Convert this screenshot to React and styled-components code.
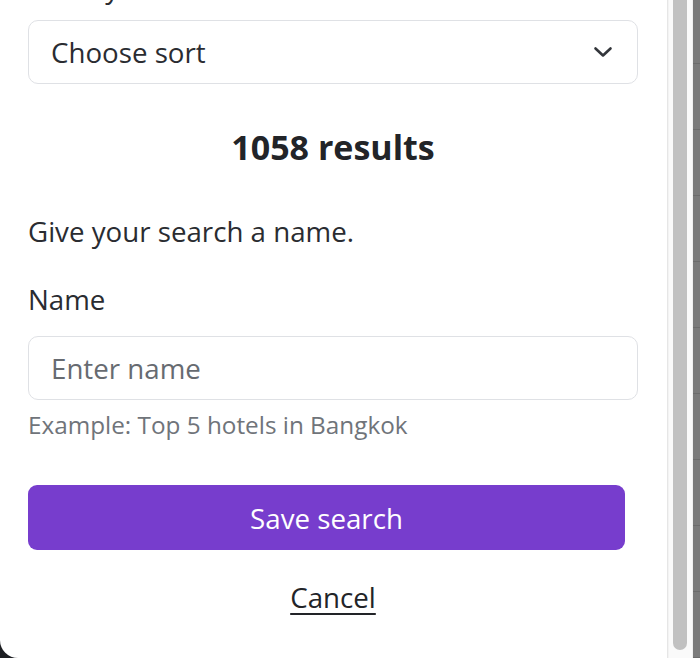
import React, { useLayoutEffect, useRef } from "react";
import styled, { createGlobalStyle } from "styled-components";

const GlobalStyle = createGlobalStyle`
  html, body {
    margin: 0;
    padding: 0;
    background: #1c1e22;
  }
  body {
    font-family: "Open Sans", "Noto Sans", sans-serif;
    -webkit-font-smoothing: antialiased;
  }
  * {
    box-sizing: border-box;
  }
`;

const Screen = styled.div`
  display: flex;
  width: 700px;
  height: 658px;
  overflow: hidden;
`;

const Modal = styled.div`
  display: flex;
  flex: 0 0 693px;
  height: 658px;
  background: #ffffff;
  border-bottom-left-radius: 18px;
  overflow: hidden;
`;

const Pane = styled.div`
  flex: 1;
  min-width: 0;
  overflow-y: auto;
  scrollbar-width: none;
  &::-webkit-scrollbar {
    display: none;
  }
`;

const ScrollTrack = styled.div`
  display: flex;
  flex: 0 0 26px;
  padding: 0 5px 8px 5px;
  background: #fafafa;
  border-left: 1px solid #e6e6e6;
  border-right: 1px solid #f0f0f0;
  box-shadow: inset 1px 0 0 #f3f3f3;
`;

const ScrollThumb = styled.div`
  flex: 1;
  background: #c1c1c1;
  border-radius: 0 0 8px 8px;
`;

const Backdrop = styled.div`
  flex: 1;
  height: 658px;
  background: repeating-linear-gradient(
    to bottom,
    #7b7b7b 0 63px,
    #6c6c6c 63px 64px,
    #7b7b7b 64px 66px
  );
`;

const Body = styled.div`
  display: flex;
  flex-direction: column;
  padding: 0 29px 43px 28px;
  color: #26282c;
`;

const Text = styled.p`
  margin: ${(p) => p.$mt || 0}px 0 0;
  font-size: 27.7px;
  line-height: 36px;
  color: #2a2c31;
`;

const Label = styled.label`
  display: block;
  margin-top: ${(p) => p.$mt || 0}px;
  font-size: 27.7px;
  line-height: 36px;
  color: #2a2c31;
`;

const Field = styled.div`
  position: relative;
  margin-top: ${(p) => p.$mt || 0}px;
`;

const Select = styled.select`
  display: block;
  width: 100%;
  height: 64px;
  padding: 0 60px 0 22px;
  appearance: none;
  background: #ffffff;
  border: 1px solid #dfe1e5;
  border-radius: 10px;
  font-family: inherit;
  font-size: 27.7px;
  color: #2a2c31;
  outline: none;
`;

const Chevron = styled.svg`
  position: absolute;
  top: 25px;
  right: 25px;
  width: 20px;
  height: 14px;
  pointer-events: none;
`;

const Results = styled.h2`
  margin: 41px 0 0;
  font-size: 34px;
  line-height: 44px;
  font-weight: 700;
  text-align: center;
  color: #222428;
`;

const Input = styled.input`
  display: block;
  width: 100%;
  height: 64px;
  padding: 0 22px;
  background: #ffffff;
  border: 1px solid #dfe1e5;
  border-radius: 10px;
  font-family: inherit;
  font-size: 27.7px;
  color: #2a2c31;
  outline: none;

  &::placeholder {
    color: #676b71;
  }
`;

const Hint = styled.p`
  margin: 9px 0 0;
  font-size: 24.3px;
  line-height: 31px;
  color: #70747a;
`;

const PrimaryButton = styled.button`
  margin: 45px 13px 0 0;
  height: 65px;
  border: none;
  border-radius: 9px;
  background: #773dcd;
  color: #ffffff;
  font-family: inherit;
  font-size: 27.7px;
  cursor: pointer;
`;

const LinkButton = styled.button`
  align-self: center;
  margin-top: 29px;
  padding: 0;
  border: none;
  background: none;
  font-family: inherit;
  font-size: 27.7px;
  line-height: 36px;
  color: #222428;
  text-decoration: underline;
  text-underline-offset: 5px;
  text-decoration-thickness: 2px;
  cursor: pointer;
`;

export default function App() {
  const scroller = useRef(null);

  useLayoutEffect(() => {
    if (scroller.current) {
      scroller.current.scrollTop = scroller.current.scrollHeight;
    }
  }, []);

  return (
    <>
      <GlobalStyle />
      <Screen>
        <Modal>
          <Pane ref={scroller}>
            <Body>
              <Label htmlFor="sort">Sort by</Label>
              <Field $mt={15}>
                <Select id="sort" defaultValue="">
                  <option value="">Choose sort</option>
                  <option value="price">Price</option>
                  <option value="rating">Rating</option>
                </Select>
                <Chevron viewBox="0 0 20 14" fill="none">
                  <path
                    d="M2.5 3.5L10 10.5L17.5 3.5"
                    stroke="#33363b"
                    strokeWidth="2.6"
                    strokeLinecap="round"
                    strokeLinejoin="round"
                  />
                </Chevron>
              </Field>
              <Results>1058 results</Results>
              <Text $mt={44}>Give your search a name.</Text>
              <Label htmlFor="name" $mt={32}>
                Name
              </Label>
              <Field $mt={19}>
                <Input id="name" type="text" placeholder="Enter name" />
              </Field>
              <Hint>Example: Top 5 hotels in Bangkok</Hint>
              <PrimaryButton type="button">Save search</PrimaryButton>
              <LinkButton type="button">Cancel</LinkButton>
            </Body>
          </Pane>
          <ScrollTrack>
            <ScrollThumb />
          </ScrollTrack>
        </Modal>
        <Backdrop />
      </Screen>
    </>
  );
}
